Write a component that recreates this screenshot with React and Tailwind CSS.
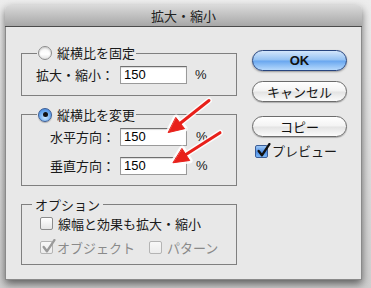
import React from "react";

const jp = { fontFamily: '"Noto Sans CJK JP", "Noto Sans", sans-serif' };

function Radio({ checked }) {
  if (checked) {
    return (
      <span className="inline-flex items-center justify-center w-[14px] h-[14px] rounded-full border border-[#3b5d96] bg-[radial-gradient(circle_at_50%_70%,#c9e6ff_0%,#6aa9ee_55%,#3f7fd6_100%)] shadow-[0_1px_1px_rgba(0,0,0,0.25)]">
        <span className="w-[5px] h-[5px] rounded-full bg-[#111]" />
      </span>
    );
  }
  return (
    <span className="inline-block w-[14px] h-[14px] rounded-full border border-[#8c8c8c] bg-[linear-gradient(to_bottom,#f4f4f4,#ffffff_60%,#e2e2e2)] shadow-[inset_0_1px_2px_rgba(0,0,0,0.2)]" />
  );
}

function Check({ checked, disabled, blue }) {
  let box = "border-[#8c8c8c] bg-[linear-gradient(to_bottom,#ffffff,#e4e4e4)]";
  if (disabled) box = "border-[#b4b4b4] bg-[linear-gradient(to_bottom,#f8f8f8,#ececec)]";
  if (blue) box = "border-[#3b5d96] bg-[linear-gradient(to_bottom,#9fc8f5,#4f8fe6_55%,#7ab6f6)]";
  return (
    <span className={`relative inline-block w-[13px] h-[13px] rounded-[2px] border ${box}`}>
      {checked && (
        <svg viewBox="0 0 14 14" className="absolute left-[0px] top-[-3px] w-[15px] h-[15px]">
          <path
            d="M2.5 7.5 L5.5 11.5 L12.5 1"
            fill="none"
            stroke={disabled ? "#9a9a9a" : "#111"}
            strokeWidth="2.2"
            strokeLinecap="round"
            strokeLinejoin="round"
          />
        </svg>
      )}
    </span>
  );
}

function NumField() {
  return (
    <div className="w-[67px] h-[18px] bg-white border border-[#9a9a9a] border-t-[#6f6f6f] shadow-[inset_0_1px_1px_rgba(0,0,0,0.15)] pl-[3px] flex items-center text-[13px] text-black font-['Liberation_Sans',sans-serif]">
      150
    </div>
  );
}

function Pill({ children, primary }) {
  const look = primary
    ? "border-[#27457f] bg-[linear-gradient(to_bottom,#d3e6fb_0%,#93c1f3_48%,#68a6ef_52%,#b6d9fc_100%)] shadow-[0_1px_2px_rgba(0,0,0,0.35)]"
    : "border-[#6c6c6c] bg-[linear-gradient(to_bottom,#ffffff_0%,#f3f3f3_48%,#e3e3e3_52%,#fbfbfb_100%)] shadow-[0_1px_1px_rgba(0,0,0,0.25)]";
  return (
    <div className={`w-[95px] h-[21px] rounded-full border flex items-center justify-center text-[13px] text-[#111] ${look}`}>
      {children}
    </div>
  );
}

export default function App() {
  return (
    <div style={jp} className="relative w-[371px] h-[288px] overflow-hidden bg-[linear-gradient(to_bottom,#ededed,#cfcfcf)] pt-[5px] pl-[5px]">
      <div className="w-[357px] h-[275px] flex flex-col rounded-t-[5px] shadow-[0_4px_9px_rgba(0,0,0,0.55)]">
        <div className="h-[22px] rounded-t-[5px] border-b border-[#4b4b4b] bg-[linear-gradient(to_bottom,#dadada,#a7a7a7)] flex items-center justify-center text-[13px] text-[#222]">
          拡大・縮小
        </div>

        <div className="flex-1 flex bg-[#e8e8e8] border-x border-b border-[#8a8a8a] pl-[15px] pt-[18px] text-[13px] text-[#1a1a1a]">
          <div className="w-[216px] flex flex-col">
            <fieldset className="border border-[#7f7f7f]">
              <legend className="ml-[15px] px-[1px] h-[16px] flex items-center gap-[5px] leading-[16px]">
                <Radio />
                <span>縦横比を固定</span>
              </legend>
              <div className="pt-[4px] pb-[10px] pl-[14px] flex items-center">
                <span className="w-[84px]">拡大・縮小：</span>
                <NumField />
                <span className="ml-[8px] font-['Liberation_Sans',sans-serif]">%</span>
              </div>
            </fieldset>

            <fieldset className="mt-[11px] border border-[#7f7f7f]">
              <legend className="ml-[15px] px-[1px] h-[16px] flex items-center gap-[5px] leading-[16px]">
                <Radio checked />
                <span>縦横比を変更</span>
              </legend>
              <div className="pt-[5px] pb-[10px] pl-[28px] flex flex-col gap-[11px]">
                <div className="flex items-center h-[18px]">
                  <span className="w-[70px]">水平方向：</span>
                  <NumField />
                  <span className="ml-[9px] font-['Liberation_Sans',sans-serif]">%</span>
                </div>
                <div className="flex items-center h-[18px]">
                  <span className="w-[70px]">垂直方向：</span>
                  <NumField />
                  <span className="ml-[9px] font-['Liberation_Sans',sans-serif]">%</span>
                </div>
              </div>
            </fieldset>

            <fieldset className="mt-[11px] border border-[#7f7f7f]">
              <legend className="ml-[10px] px-[3px] h-[16px] leading-[16px]">オプション</legend>
              <div className="pt-[3px] pb-[8px] pl-[18px] flex flex-col gap-[8px]">
                <div className="flex items-center h-[16px] gap-[5px]">
                  <Check />
                  <span>線幅と効果も拡大・縮小</span>
                </div>
                <div className="flex items-center h-[16px] text-[#8a8a8a]">
                  <Check checked disabled />
                  <span className="ml-[4px]">オブジェクト</span>
                  <span className="ml-[14px] flex"><Check disabled /></span>
                  <span className="ml-[5px]">パターン</span>
                </div>
              </div>
            </fieldset>
          </div>

          <div className="ml-[15px] pt-[5px] flex flex-col">
            <Pill primary>
              <span className="font-['Liberation_Sans',sans-serif] font-bold text-[13px]">OK</span>
            </Pill>
            <div className="mt-[10px]">
              <Pill>キャンセル</Pill>
            </div>
            <div className="mt-[14px]">
              <Pill>コピー</Pill>
            </div>
            <div className="mt-[6px] ml-[3px] flex items-center gap-[4px] h-[16px]">
              <Check checked blue />
              <span>プレビュー</span>
            </div>
          </div>
        </div>
      </div>

      <svg className="absolute left-0 top-0 pointer-events-none" width="371" height="288" viewBox="0 0 371 288">
        <g stroke="rgba(255,255,255,0.85)" strokeWidth="6" strokeLinecap="round" strokeLinejoin="round" fill="rgba(255,255,255,0.85)">
          <line x1="209" y1="100.5" x2="180.3" y2="123.2" />
          <polygon points="168.5,132.5 184.6,128.7 176,117.7" />
          <line x1="220" y1="132.7" x2="185.9" y2="154.6" />
          <polygon points="173.3,162.7 189.7,160.5 182.1,148.7" />
        </g>
        <g stroke="#e8201a" strokeWidth="3" strokeLinecap="round" strokeLinejoin="round" fill="#e8201a">
          <line x1="209" y1="100.5" x2="180.3" y2="123.2" />
          <polygon points="168.5,132.5 184.6,128.7 176,117.7" strokeWidth="1" />
          <line x1="220" y1="132.7" x2="185.9" y2="154.6" />
          <polygon points="173.3,162.7 189.7,160.5 182.1,148.7" strokeWidth="1" />
        </g>
      </svg>
    </div>
  );
}
